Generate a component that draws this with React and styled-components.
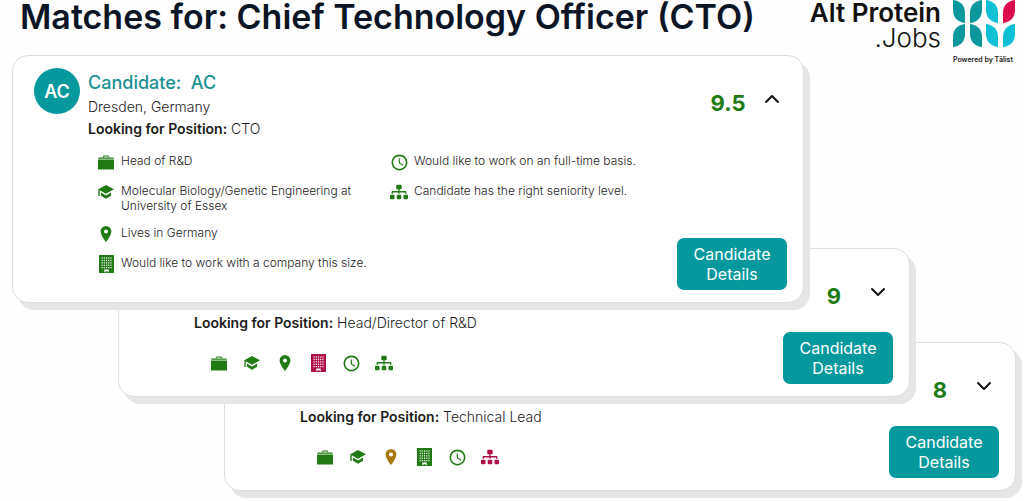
import React from 'react'
import styled, { createGlobalStyle } from 'styled-components'
import { FaSitemap } from 'react-icons/fa'
import { MdAccessTime } from 'react-icons/md'
import { FiChevronDown, FiChevronUp } from 'react-icons/fi'

const GREEN = '#217a14'
const RED = '#b0104a'
const AMBER = '#a8780f'

const BriefcaseIcon = () => (
  <svg viewBox="0 0 16 15" width="16" height="15" fill="currentColor">
    <path d="M4.6 2.4Q4.8.6 6 .6h4q1.2 0 1.4 1.8h-.9Q10.3 1.400 9.8 1.400H6.2Q5.700 1.400 5.500 2.400z" />
    <path d="M.4 2.600h15.200v1.200H.4zM0 4.400h16V14.600H0z" />
  </svg>
)

const SchoolIcon = () => (
  <svg viewBox="0 0 16 14" width="16" height="14" fill="currentColor">
    <path d="M8 0l8 4.300-8 4.500-6.300-3.500V11H.3V4.300z" />
    <path d="M3 7.600l5 2.800 5-2.800v3.200L8 13.800l-5-3z" />
  </svg>
)

const PinIcon = () => (
  <svg viewBox="0 0 12 16" width="12" height="16" fill="currentColor">
    <path
      fillRule="evenodd"
      d="M6 0a5.400 5.400 0 0 1 5.400 5.400C11.400 9 6 16 6 16S.6 9 .6 5.400A5.400 5.400 0 0 1 6 0zm0 3.400a2 2 0 1 0 0 4 2 2 0 0 0 0-4z"
    />
  </svg>
)

const BuildingIcon = () => (
  <svg viewBox="0 0 15 18" width="15" height="18">
    <path fill="currentColor" d="M0 0h15v18H0z" />
    {[2.6, 4.8, 7, 9.2, 11.4].map((x) =>
      [2.4, 4.8, 7.2, 9.6, 12].map((y) => (
        <rect key={`${x}-${y}`} x={x} y={y} width="1.1" height="1.3" fill="#fff" />
      ))
    )}
    <path fill="#fff" d="M5.300 14.600h4.400v2.600H8.600v-.9H6.400v.9H5.300z" />
  </svg>
)

const icons = {
  job: <BriefcaseIcon />,
  school: <SchoolIcon />,
  place: <PinIcon />,
  company: <BuildingIcon />,
  time: <MdAccessTime size={19} />,
  level: <FaSitemap size={18} />,
}

const matches = [
  {
    initials: 'AC',
    location: 'Dresden, Germany',
    position: 'CTO',
    score: '9.5',
    open: true,
    columns: [
      [
        ['job', 'Head of R&D'],
        ['school', 'Molecular Biology/Genetic Engineering at University of Essex'],
        ['place', 'Lives in Germany'],
        ['company', 'Would like to work with a company this size.'],
      ],
      [
        ['time', 'Would like to work on an full-time basis.'],
        ['level', 'Candidate has the right seniority level.'],
      ],
    ],
  },
  {
    position: 'Head/Director of R&D',
    score: '9',
    marks: { job: GREEN, school: GREEN, place: GREEN, company: RED, time: GREEN, level: GREEN },
  },
  {
    position: 'Technical Lead',
    score: '8',
    marks: { job: GREEN, school: GREEN, place: AMBER, company: GREEN, time: GREEN, level: RED },
  },
]

function Logo() {
  return (
    <Brand>
      <BrandName>
        Alt Protein
        <span>.Jobs</span>
      </BrandName>
      <BrandMark>
        <svg viewBox="0 0 62 47" width="62" height="47">
          <g fill="#0b979b">
            <path d="M0 0C8 1 12 6 12 13V23C4 22 0 17 0 10z" />
            <path d="M0 47C8 46 12 41 12 34V24C4 25 0 30 0 37z" />
            <path d="M29 0C21 1 17 6 17 13V23C25 22 29 17 29 10z" />
            <path d="M29 47C21 46 17 41 17 34V24C25 25 29 30 29 37z" />
          </g>
          <g fill="#10c0d4">
            <path d="M33 0C41 1 45 6 45 13V23C37 22 33 17 33 10z" />
            <path d="M33 24C41 25 45 30 45 37V47C37 46 33 41 33 34z" />
            <path d="M62 24C54 25 50 30 50 37V47C58 46 62 41 62 34z" />
          </g>
          <path fill="#dc0b4c" d="M62 0C54 1 50 6 50 13V23C58 22 62 17 62 10z" />
        </svg>
        <small>Powered by Tälist</small>
      </BrandMark>
    </Brand>
  )
}

function MatchCard({ match, index }) {
  return (
    <Card $index={index} $open={match.open}>
      {match.open && <Avatar>{match.initials}</Avatar>}
      <Info $open={match.open}>
        {match.open && (
          <>
            <Name>Candidate:&nbsp; {match.initials}</Name>
            <Location>{match.location}</Location>
          </>
        )}
        <Position>
          <b>Looking for Position:</b> {match.position}
        </Position>
        {match.open ? (
          <Reasons>
            {match.columns.map((column, i) => (
              <ReasonList key={i}>
                {column.map(([icon, text]) => (
                  <Reason key={icon}>
                    <Mark $color={GREEN}>{icons[icon]}</Mark>
                    {text}
                  </Reason>
                ))}
              </ReasonList>
            ))}
          </Reasons>
        ) : (
          <Marks>
            {Object.entries(match.marks).map(([icon, color]) => (
              <Mark key={icon} $color={color}>
                {icons[icon]}
              </Mark>
            ))}
          </Marks>
        )}
      </Info>
      <Side>
        <ScoreRow>
          <Score>{match.score}</Score>
          <Toggle aria-label={match.open ? 'Collapse' : 'Expand'}>
            {match.open ? <FiChevronUp size={24} /> : <FiChevronDown size={24} />}
          </Toggle>
        </ScoreRow>
        <DetailsButton>Candidate Details</DetailsButton>
      </Side>
    </Card>
  )
}

export default function App() {
  return (
    <Page>
      <GlobalStyle />
      <Header>
        <Title>Matches for: Chief Technology Officer (CTO)</Title>
        <Logo />
      </Header>
      <Stack>
        {matches.map((match, index) => (
          <MatchCard key={match.position} match={match} index={index} />
        ))}
      </Stack>
    </Page>
  )
}

const GlobalStyle = createGlobalStyle`
  * {
    box-sizing: border-box;
  }

  body {
    margin: 0;
    background: #fefefe;
    color: #1c1c1c;
    font-family: Inter, sans-serif;
  }
`

const Page = styled.main`
  overflow: hidden;
`

const Header = styled.header`
  display: flex;
  justify-content: space-between;
  align-items: flex-start;
  height: 55px;
  padding: 0 9px 0 20px;
`

const Title = styled.h1`
  margin: 0;
  color: #0b1526;
  font-size: 34px;
  font-weight: 600;
  line-height: 34px;
  white-space: nowrap;
`

const Brand = styled.div`
  display: flex;
  gap: 12px;
`

const BrandName = styled.div`
  color: #111;
  font-size: 26px;
  font-weight: 600;
  line-height: 25px;
  text-align: right;
  white-space: nowrap;

  span {
    display: block;
    font-weight: 300;
  }
`

const BrandMark = styled.div`
  display: flex;
  flex-direction: column;
  gap: 8px;
  width: 62px;

  small {
    font-size: 7px;
    font-weight: 600;
    line-height: 10px;
    white-space: nowrap;
  }
`

const Stack = styled.section`
  padding: 0 8px 8px 12px;
`

/* every card sits lower and further right, tucked under the one before */
const Card = styled.article`
  position: relative;
  z-index: ${(props) => 3 - props.$index};
  display: flex;
  width: calc(100% - 212px);
  min-height: ${(props) => (props.$open ? 248 : 149)}px;
  margin-top: ${(props) => (props.$index ? -55 : 0)}px;
  margin-left: ${(props) => props.$index * 106}px;
  padding: 12px 16px 12px ${(props) => (props.$open ? 21 : 75)}px;
  border: 1px solid #dedede;
  border-radius: 16px;
  background: #fff;
  box-shadow: 6px 7px 0 #e6e6e6;
`

const Avatar = styled.div`
  display: flex;
  flex: none;
  align-items: center;
  justify-content: center;
  width: 46px;
  height: 46px;
  margin-right: 8px;
  border-radius: 50%;
  background: #05989c;
  color: #fff;
  font-size: 18px;
  font-weight: 600;
`

const Info = styled.div`
  flex: 1;
  min-width: 0;
  padding-top: ${(props) => (props.$open ? 4 : 51)}px;
`

const Name = styled.h2`
  margin: 0 0 2px;
  color: #1b9195;
  font-size: 18px;
  font-weight: 500;
  line-height: 22px;
`

const Location = styled.p`
  margin: 0;
  font-size: 14px;
  font-weight: 300;
  line-height: 22px;
`

const Position = styled.p`
  margin: 0;
  font-size: 14px;
  font-weight: 300;
  line-height: 22px;

  b {
    font-weight: 600;
  }
`

const Reasons = styled.div`
  display: grid;
  grid-template-columns: 293px 1fr;
  margin: 13px 0 0 8px;
`

const ReasonList = styled.ul`
  display: flex;
  flex-direction: column;
  gap: 12px;
  margin: 0;
  padding: 0;
  list-style: none;
`

const Reason = styled.li`
  display: flex;
  gap: 5px;
  padding-right: 12px;
  font-size: 12px;
  font-weight: 300;
  line-height: 15px;
`

const Mark = styled.span`
  display: flex;
  flex: none;
  align-items: center;
  justify-content: center;
  width: 20px;
  height: 18px;
  color: ${(props) => props.$color};
`

const Marks = styled.div`
  display: flex;
  gap: 13px;
  margin: 20px 0 0 15px;
`

const Side = styled.div`
  display: flex;
  flex: none;
  flex-direction: column;
  align-items: flex-end;
  justify-content: space-between;
  padding-top: 19px;
`

const ScoreRow = styled.div`
  display: flex;
  align-items: flex-start;
  gap: 8px;
  padding-right: 3px;
`

const Score = styled.strong`
  width: 48px;
  color: ${GREEN};
  font-size: 22px;
  font-weight: 700;
  line-height: 32px;
  text-align: center;
`

const Toggle = styled.button`
  display: flex;
  padding: 0;
  border: 0;
  background: none;
  color: #111;
  cursor: pointer;
`

const DetailsButton = styled.button`
  width: 110px;
  padding: 6px 10px;
  border: 0;
  border-radius: 7px;
  background: #05989c;
  color: #fff;
  font-family: inherit;
  font-size: 16px;
  line-height: 20px;
  cursor: pointer;
`
